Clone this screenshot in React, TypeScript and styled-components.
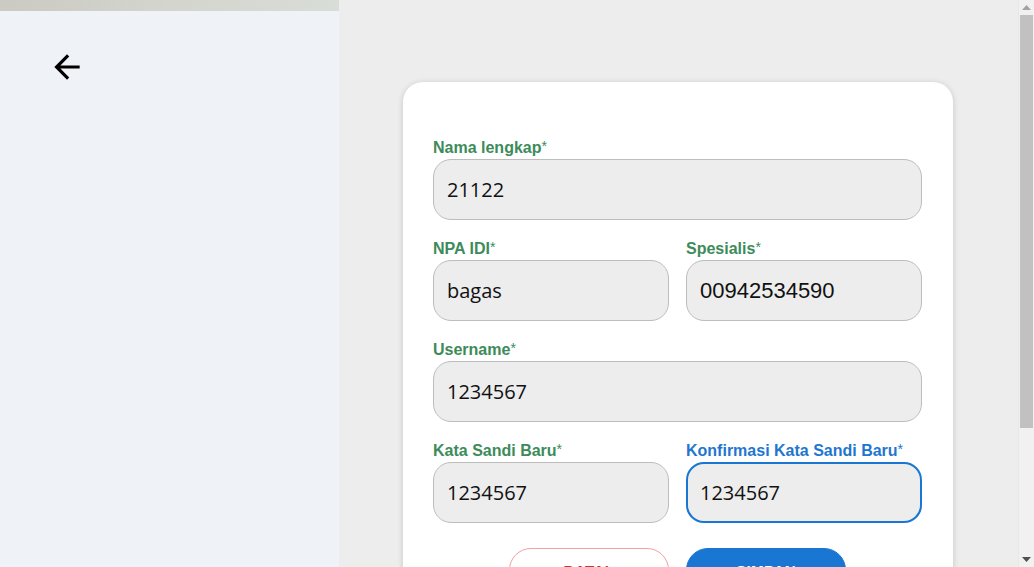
import React from 'react';
import styled, { createGlobalStyle } from 'styled-components';

const GlobalStyle = createGlobalStyle`
  html, body {
    margin: 0;
    padding: 0;
    height: 100%;
    overflow: hidden;
  }
  body {
    font-family: "Liberation Sans", Arial, sans-serif;
  }
`;

type FieldProps = {
  label: string;
  value: string;
  focused?: boolean;
  mono?: boolean;
};

const Field = ({ label, value, focused, mono }: FieldProps) => (
  <FieldWrap>
    <Label $focused={focused}>
      {label}
      <Star>*</Star>
    </Label>
    <Input readOnly defaultValue={value} $focused={focused} $alt={mono} />
  </FieldWrap>
);

const App = () => {
  return (
    <>
      <GlobalStyle />
      <Page>
        <Side>
          <TopStrip />
          <BackButton aria-label="kembali">
            <svg width="38" height="38" viewBox="0 0 24 24" fill="#000">
              <path d="M20 11H7.83l5.59-5.59L12 4l-8 8 8 8 1.41-1.41L7.83 13H20v-2z" />
            </svg>
          </BackButton>
        </Side>
        <Main>
          <Card>
            <Field label="Nama lengkap" value="21122" />
            <Row>
              <Field label="NPA IDI" value="bagas" />
              <Field label="Spesialis" value="00942534590" mono />
            </Row>
            <Field label="Username" value="1234567" />
            <Row>
              <Field label="Kata Sandi Baru" value="1234567" />
              <Field label="Konfirmasi Kata Sandi Baru" value="1234567" focused />
            </Row>
            <Actions>
              <Button $variant="outline">BATAL</Button>
              <Button $variant="solid">SIMPAN</Button>
            </Actions>
          </Card>
        </Main>
        <Scrollbar>
          <ScrollArrow>
            <svg width="9" height="5" viewBox="0 0 9 5"><path d="M0 5L4.5 0L9 5z" fill="#a3a3a3" /></svg>
          </ScrollArrow>
          <ScrollTrack>
            <Thumb />
          </ScrollTrack>
          <ScrollArrow>
            <svg width="9" height="5" viewBox="0 0 9 5"><path d="M0 0L4.5 5L9 0z" fill="#505050" /></svg>
          </ScrollArrow>
        </Scrollbar>
      </Page>
    </>
  );
};

const Page = styled.div`
  display: flex;
  width: 1034px;
  height: 567px;
  overflow: hidden;
`;

const Side = styled.aside`
  width: 339px;
  flex-shrink: 0;
  background: #eff2f7;
  display: flex;
  flex-direction: column;
`;

const TopStrip = styled.div`
  height: 11px;
  background: linear-gradient(90deg, #cbcac3 0%, #d3d5ce 50%, #d9ddd7 100%);
`;

const BackButton = styled.button`
  margin: 37px 0 0 48px;
  width: 38px;
  height: 38px;
  padding: 0;
  border: none;
  background: transparent;
  display: flex;
  cursor: pointer;
`;

const Main = styled.main`
  flex: 1;
  background: #ededed;
  display: flex;
  align-items: flex-start;
  padding: 82px 0 0 64px;
  overflow: hidden;
`;

const Card = styled.section`
  width: 550px;
  flex-shrink: 0;
  box-sizing: border-box;
  background: #fff;
  border-radius: 20px;
  box-shadow: 0 1px 6px rgba(0, 0, 0, 0.16);
  padding: 54px 31px 40px 30px;
  display: flex;
  flex-direction: column;
  gap: 17px;
`;

const Row = styled.div`
  display: grid;
  grid-template-columns: 1fr 1fr;
  gap: 17px;
`;

const FieldWrap = styled.div`
  display: flex;
  flex-direction: column;
  gap: 1px;
  min-width: 0;
`;

const Label = styled.label<{ $focused?: boolean }>`
  font-family: "Liberation Sans", Arial, sans-serif;
  font-weight: 700;
  font-size: 16px;
  line-height: 20px;
  height: 20px;
  padding-top: 2px;
  color: ${p => (p.$focused ? '#1f76d0' : '#3d8b5a')};
`;

const Star = styled.span`
  font-weight: 400;
  font-size: 14px;
  position: relative;
  top: -2px;
`;

const Input = styled.input<{ $focused?: boolean; $alt?: boolean }>`
  box-sizing: border-box;
  height: 61px;
  width: 100%;
  border-radius: 18px;
  background: #ededed;
  border: ${p => (p.$focused ? '2px solid #1976d2' : '1px solid #bdbdbd')};
  padding: 0 ${p => (p.$focused ? '12px' : '13px')};
  font-family: ${p => (p.$alt ? '"Liberation Sans", Arial' : '"Open Sans"')}, sans-serif;
  font-size: ${p => (p.$alt ? '22px' : '20px')};
  color: #111;
  outline: none;
`;

const Actions = styled.div`
  display: flex;
  justify-content: center;
  gap: 17px;
  margin-top: 8px;
`;

const Button = styled.button<{ $variant: 'outline' | 'solid' }>`
  width: 160px;
  height: 44px;
  border-radius: 22px;
  font-family: "Liberation Sans", Arial, sans-serif;
  font-weight: 700;
  font-size: 15px;
  letter-spacing: 0.5px;
  cursor: pointer;
  border: 1px solid ${p => (p.$variant === 'outline' ? '#eea2a2' : '#1976d2')};
  background: ${p => (p.$variant === 'outline' ? '#fff' : '#1976d2')};
  color: ${p => (p.$variant === 'outline' ? '#d32f2f' : '#fff')};
`;

const Scrollbar = styled.div`
  width: 16px;
  flex-shrink: 0;
  background: #f1f1f1;
  border-left: 1px solid #e8e8e8;
  box-sizing: border-box;
  display: flex;
  flex-direction: column;
`;

const ScrollArrow = styled.div`
  height: 15px;
  display: flex;
  align-items: center;
  justify-content: center;
`;

const ScrollTrack = styled.div`
  flex: 1;
  display: flex;
  flex-direction: column;
  padding: 0 1px 0 1px;
`;

const Thumb = styled.div`
  height: 413px;
  background: #c1c1c1;
`;

export default App;
